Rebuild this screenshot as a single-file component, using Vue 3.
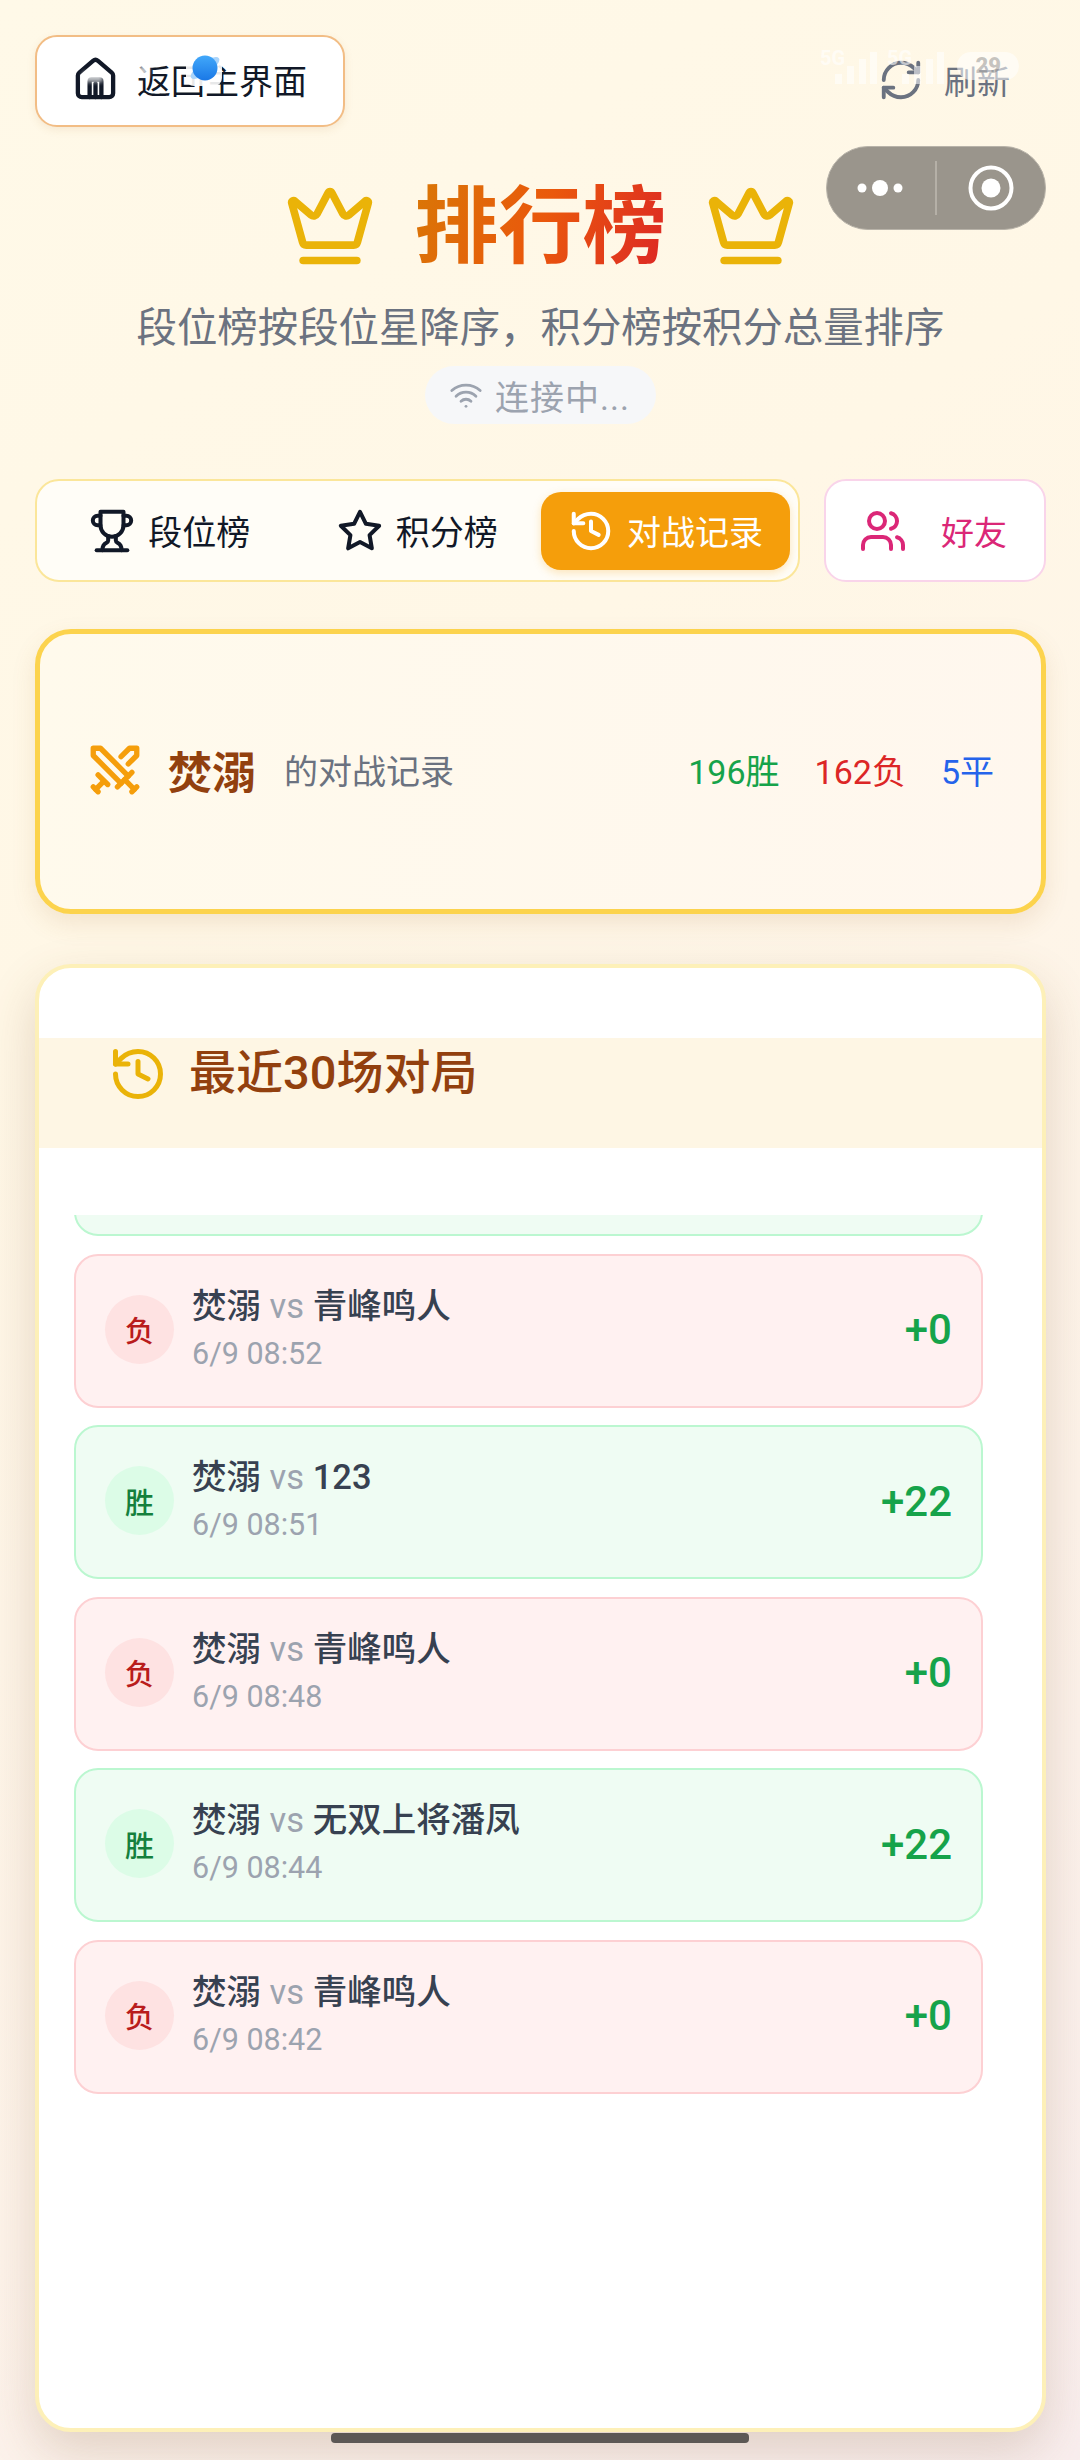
<script setup>
const rows = [
  { win: false, opp: '青峰鸣人', time: '6/9 08:52', score: '+0' },
  { win: true, opp: '123', time: '6/9 08:51', score: '+22' },
  { win: false, opp: '青峰鸣人', time: '6/9 08:48', score: '+0' },
  { win: true, opp: '无双上将潘凤', time: '6/9 08:44', score: '+22' },
  { win: false, opp: '青峰鸣人', time: '6/9 08:42', score: '+0' },
]
</script>

<template>
  <div class="page">
    <div class="topbar">
      <div class="back">
        <svg class="ic-back" viewBox="0 0 24 24"><path d="M15 21v-8a1 1 0 0 0-1-1h-4a1 1 0 0 0-1 1v8" /><path d="M12 14v7" /><path d="M3 10a2 2 0 0 1 .709-1.528l7-5.999a2 2 0 0 1 2.582 0l7 5.999A2 2 0 0 1 21 10v9a2 2 0 0 1-2 2H5a2 2 0 0 1-2-2z" /></svg>
        <span>返回主界面</span>
      </div>
      <div class="refresh">
        <svg class="ic-refresh" viewBox="0 0 24 24"><path d="M3 12a9 9 0 0 1 9-9 9.75 9.75 0 0 1 6.74 2.74L21 8" /><path d="M21 3v5h-5" /><path d="M21 12a9 9 0 0 1-9 9 9.75 9.75 0 0 1-6.74-2.74L3 16" /><path d="M8 16H3v5" /></svg>
        <span>刷新</span>
      </div>
    </div>

    <div class="title-row">
      <svg class="crown" viewBox="0 0 24 24"><path d="M11.562 3.266a.5.5 0 0 1 .876 0L15.39 8.87a1 1 0 0 0 1.516.294L21.183 5.5a.5.5 0 0 1 .798.519l-2.834 10.246a1 1 0 0 1-.956.734H5.81a1 1 0 0 1-.957-.734L2.02 6.02a.5.5 0 0 1 .798-.519l4.276 3.664a1 1 0 0 0 1.516-.294z" /><path d="M5 21h14" /></svg>
      <h1>排行榜</h1>
      <svg class="crown" viewBox="0 0 24 24"><path d="M11.562 3.266a.5.5 0 0 1 .876 0L15.39 8.87a1 1 0 0 0 1.516.294L21.183 5.5a.5.5 0 0 1 .798.519l-2.834 10.246a1 1 0 0 1-.956.734H5.81a1 1 0 0 1-.957-.734L2.02 6.02a.5.5 0 0 1 .798-.519l4.276 3.664a1 1 0 0 0 1.516-.294z" /><path d="M5 21h14" /></svg>
    </div>
    <p class="subtitle">段位榜按段位星降序，积分榜按积分总量排序</p>
    <div class="pill-wrap">
      <div class="pill">
        <svg class="ic-wifi" viewBox="0 0 24 24"><path d="M12 20h.01" /><path d="M2 8.82a15 15 0 0 1 20 0" /><path d="M5 12.859a10 10 0 0 1 14 0" /><path d="M8.5 16.429a5 5 0 0 1 7 0" /></svg>
        <span>连接中...</span>
      </div>
    </div>

    <div class="nav">
      <div class="tabs">
        <div class="tab">
          <svg class="ic-tab" viewBox="0 0 24 24"><path d="M6 9H4.5a2.5 2.5 0 0 1 0-5H6" /><path d="M18 9h1.5a2.5 2.5 0 0 0 0-5H18" /><path d="M4 22h16" /><path d="M10 14.66V17c0 .55-.47.98-.97 1.21C7.85 18.75 7 20.24 7 22" /><path d="M14 14.66V17c0 .55.47.98.97 1.21C16.15 18.75 17 20.24 17 22" /><path d="M18 2H6v7a6 6 0 0 0 12 0V2Z" /></svg>
          <span>段位榜</span>
        </div>
        <div class="tab">
          <svg class="ic-tab" viewBox="0 0 24 24"><polygon points="12 2 15.09 8.26 22 9.27 17 14.14 18.18 21.02 12 17.77 5.82 21.02 7 14.14 2 9.27 8.91 8.26 12 2" /></svg>
          <span>积分榜</span>
        </div>
        <div class="tab active">
          <svg class="ic-tab" viewBox="0 0 24 24"><path d="M3 12a9 9 0 1 0 9-9 9.75 9.75 0 0 0-6.74 2.74L3 8" /><path d="M3 3v5h5" /><path d="M12 7v5l4 2" /></svg>
          <span>对战记录</span>
        </div>
      </div>
      <div class="friends">
        <svg class="ic-friends" viewBox="0 0 24 24"><path d="M16 21v-2a4 4 0 0 0-4-4H6a4 4 0 0 0-4 4v2" /><circle cx="9" cy="7" r="4" /><path d="M22 21v-2a4 4 0 0 0-3-3.87" /><path d="M16 3.13a4 4 0 0 1 0 7.75" /></svg>
        <span>好友</span>
      </div>
    </div>

    <div class="summary">
      <svg class="ic-swords" viewBox="0 0 24 24"><polyline points="14.5 17.5 3 6 3 3 6 3 17.5 14.5" /><line x1="13" y1="19" x2="19" y2="13" /><line x1="16" y1="16" x2="20" y2="20" /><line x1="19" y1="21" x2="21" y2="19" /><polyline points="14.5 6.5 18 3 21 3 21 6 17.5 9.5" /><line x1="5" y1="14" x2="9" y2="18" /><line x1="7" y1="17" x2="4" y2="20" /><line x1="3" y1="19" x2="5" y2="21" /></svg>
      <span class="name">焚溺</span>
      <span class="of">的对战记录</span>
      <div class="stats">
        <span class="w">196胜</span>
        <span class="l">162负</span>
        <span class="d">5平</span>
      </div>
    </div>

    <div class="history">
      <div class="band">
        <svg class="ic-hist" viewBox="0 0 24 24"><path d="M3 12a9 9 0 1 0 9-9 9.75 9.75 0 0 0-6.74 2.74L3 8" /><path d="M3 3v5h5" /><path d="M12 7v5l4 2" /></svg>
        <span>最近30场对局</span>
      </div>
      <div class="list">
        <div class="row win first"></div>
        <div v-for="(r, i) in rows" :key="i" class="row" :class="r.win ? 'win' : 'lose'">
          <div class="badge">{{ r.win ? '胜' : '负' }}</div>
          <div class="info">
            <div class="match">焚溺 <i>vs</i> {{ r.opp }}</div>
            <div class="time">{{ r.time }}</div>
          </div>
          <div class="score">{{ r.score }}</div>
        </div>
      </div>
    </div>

    <div class="capsule">
      <svg class="dots" viewBox="0 0 46 16"><circle cx="5" cy="8" r="4.5" /><circle cx="23" cy="8" r="8" /><circle cx="41" cy="8" r="4.5" /></svg>
      <i class="sep"></i>
      <svg class="target" viewBox="0 0 46 46"><circle cx="23" cy="23" r="20.5" /><circle cx="23" cy="23" r="9.5" class="fill" /></svg>
    </div>

    <div class="ghost ghost-a"></div>
    <div class="ghost ghost-b"></div>

    <div class="statusbar">
      <span>5G</span>
      <svg class="bars" viewBox="0 0 42 32"><rect x="0" y="22" width="7" height="10" /><rect x="12" y="14" width="7" height="18" /><rect x="24" y="7" width="7" height="25" /><rect x="35" y="0" width="7" height="32" /></svg>
      <span class="second">5G</span>
      <svg class="bars" viewBox="0 0 42 32"><rect x="0" y="22" width="7" height="10" /><rect x="12" y="14" width="7" height="18" /><rect x="24" y="7" width="7" height="25" /><rect x="35" y="0" width="7" height="32" /></svg>
      <b class="batt">29</b>
    </div>

    <div class="planet">
      <svg viewBox="0 0 36 36">
        <defs><linearGradient id="pg" x1="0" y1="0" x2="0" y2="1"><stop offset="0" stop-color="#42a8fa" /><stop offset="1" stop-color="#1a78e6" /></linearGradient></defs>
        <ellipse cx="19" cy="18" rx="17" ry="6" transform="rotate(-35 19 18)" fill="#a9d4fb" />
        <circle cx="19" cy="18" r="12.5" fill="url(#pg)" />
      </svg>
    </div>

    <div class="home-bar"></div>
  </div>
</template>

<style>
html, body { margin: 0; padding: 0; }
</style>

<style scoped>
.page {
  position: relative;
  box-sizing: border-box;
  width: 1080px;
  height: 2460px;
  overflow: hidden;
  padding: 35px 34px 0 35px;
  background: linear-gradient(145deg, #fff9e8 0%, #fff7e6 32%, #fdf3ea 70%, #f9eeee 100%);
  font-family: Roboto, "Noto Sans CJK SC", sans-serif;
  color: #111827;
}
svg { fill: none; stroke: currentColor; stroke-linecap: round; stroke-linejoin: round; stroke-width: 2; display: block; flex: none; }

.topbar { display: flex; justify-content: space-between; align-items: center; height: 92px; }
.back {
  box-sizing: border-box;
  width: 310px;
  height: 92px;
  display: flex;
  align-items: center;
  gap: 18px;
  padding: 0 0 3px 35px;
  background: #fff;
  border: 2px solid #f2bd85;
  border-radius: 22px;
  box-shadow: 0 3px 8px rgba(180, 120, 60, .12);
  font-size: 34px;
}
.ic-back { width: 47px; height: 47px; stroke-width: 2.2; }
.refresh { display: flex; align-items: center; gap: 20px; padding: 0 36px 3px 0; color: #6b7280; font-size: 33px; }
.ic-refresh { width: 46px; height: 46px; }

.title-row { display: flex; justify-content: center; align-items: center; gap: 38px; margin-top: 55px; height: 92px; }
.crown { width: 92px; height: 92px; color: #eab308; margin-top: -4px; }
h1 {
  margin: 0;
  font-size: 84px;
  line-height: 92px;
  font-weight: 700;
  background: linear-gradient(110deg, #d97706, #ea580c 50%, #dc2626);
  -webkit-background-clip: text;
  background-clip: text;
  color: transparent;
}
.subtitle { margin: 26px 0 0; text-align: center; font-size: 40.4px; line-height: 58px; color: #6b7280; }
.pill-wrap { display: flex; justify-content: center; margin-top: 8px; }
.pill {
  display: flex;
  align-items: center;
  gap: 12px;
  height: 58px;
  padding: 0 26px 0 24px;
  border-radius: 29px;
  background: #f6f7f9;
  color: #9ca3af;
  font-size: 34px;
  letter-spacing: 1px;
}
.ic-wifi { width: 34px; height: 34px; }

.nav { display: flex; gap: 24px; margin-top: 55px; }
.tabs {
  box-sizing: border-box;
  width: 765px;
  height: 103px;
  display: flex;
  align-items: center;
  padding: 0 9px;
  background: #fffdf7;
  border: 2px solid #fbe69a;
  border-radius: 24px;
}
.tab { display: flex; align-items: center; justify-content: center; gap: 13px; height: 78px; font-size: 34px; flex: none; width: 247.5px; }
.active { width: 249px; background: #f59e0b; color: #fff; border-radius: 20px; box-shadow: 0 3px 8px rgba(245, 158, 11, .25); }
.ic-tab { width: 46px; height: 46px; stroke-width: 2.1; }
.friends {
  box-sizing: border-box;
  width: 222px;
  height: 103px;
  display: flex;
  align-items: center;
  gap: 34px;
  padding-left: 33px;
  background: #fff;
  border: 2px solid #f9d4ea;
  border-radius: 22px;
  color: #db2777;
  font-size: 33px;
}
.ic-friends { width: 48px; height: 48px; }

.summary {
  box-sizing: border-box;
  height: 285px;
  margin-top: 47px;
  display: flex;
  align-items: center;
  padding: 0 47px 4px 46px;
  background: linear-gradient(100deg, #fffaec, #fff7ee);
  border: 5px solid #fcd34d;
  border-radius: 36px;
  box-shadow: 0 10px 24px rgba(160, 110, 50, .13);
}
.ic-swords { width: 58px; height: 58px; color: #f59e0b; margin-right: 24px; stroke-width: 2.2; }
.name { font-size: 44px; font-weight: 700; color: #92400e; margin-right: 28px; }
.of { font-size: 34px; color: #6b7280; }
.stats { margin-left: auto; display: flex; gap: 35px; font-size: 34px; }
.w { color: #16a34a; }
.l { color: #dc2626; }
.d { color: #2563eb; }

.history {
  box-sizing: border-box;
  height: 1468px;
  margin-top: 50px;
  padding-top: 70px;
  background: #fff;
  border: 4px solid #fdf0b8;
  border-radius: 36px;
  box-shadow: 0 20px 50px rgba(120, 80, 40, .2);
  display: flex;
  flex-direction: column;
}
.band {
  height: 110px;
  flex: none;
  display: flex;
  align-items: flex-start;
  gap: 21px;
  box-sizing: border-box;
  padding: 6px 0 0 69px;
  background: #fef6e4;
  color: #92400e;
  font-size: 47px;
  font-weight: 500;
  line-height: 58px;
}
.ic-hist { width: 60px; height: 60px; color: #eab308; }
.list {
  margin-top: 67px;
  flex: 1;
  min-height: 0;
  overflow: hidden;
  display: flex;
  flex-direction: column;
  gap: 17.6px;
  padding: 0 59px 0 35px;
}
.row {
  box-sizing: border-box;
  height: 154px;
  flex: none;
  display: flex;
  align-items: center;
  padding: 0 29px 0 29px;
  border: 2px solid;
  border-radius: 24px;
}
.first { margin-top: -133px; }
.win { background: #effcf3; border-color: #bbf7d0; }
.lose { background: #fff1f1; border-color: #fdd0d3; }
.badge {
  width: 69px;
  height: 69px;
  border-radius: 50%;
  flex: none;
  display: flex;
  align-items: center;
  justify-content: center;
  font-size: 29px;
  font-weight: 500;
  margin: 0 18px 3px 0;
}
.win .badge { background: #dcfce7; color: #15803d; }
.lose .badge { background: #fee2e2; color: #b91c1c; }
.info { flex: 1; padding-bottom: 5px; }
.match { font-size: 34.5px; line-height: 44px; font-weight: 500; color: #374151; }
.match i { font-style: normal; font-weight: 400; color: #9ca3af; }
.time { margin-top: 7px; font-size: 30.5px; line-height: 38px; color: #9ca3af; }
.score { font-size: 42px; font-weight: 500; color: #16a34a; margin-bottom: 2px; }

.capsule {
  position: absolute;
  left: 826px;
  top: 146px;
  width: 220px;
  height: 84px;
  box-sizing: border-box;
  border-radius: 42px;
  background: #9a958c;
  border: 1px solid #b8b3a9;
  color: #fff;
  display: flex;
  align-items: center;
}
.dots { width: 46px; height: 16px; margin-left: 30px; fill: #fff; stroke: none; }
.sep { width: 2px; height: 54px; background: #b5b0a7; margin-left: 32px; }
.target { width: 46px; height: 46px; margin-left: 31px; stroke-width: 4; }
.target .fill { fill: #fff; stroke: none; }

.ghost { position: absolute; background: rgba(255, 255, 255, .75); filter: blur(2px); pointer-events: none; }
.ghost-a { left: 83px; top: 72px; width: 20px; height: 10px; }
.ghost-b { left: 137px; top: 66px; width: 12px; height: 10px; }

.statusbar {
  position: absolute;
  left: 820px;
  top: 46px;
  display: flex;
  align-items: flex-start;
  color: rgba(255, 255, 255, .6);
  font-size: 20px;
  line-height: 24px;
  font-weight: 700;
  pointer-events: none;
}
.bars { width: 42px; height: 32px; fill: rgba(255, 255, 255, .55); stroke: none; margin: 6px 0 0 -10px; }
.second { margin-left: 10px; }
.batt {
  box-sizing: border-box;
  width: 62px;
  height: 28px;
  margin: 6px 0 0 13px;
  text-align: center;
  border-radius: 14px;
  background: rgba(255, 255, 255, .55);
  color: rgba(90, 90, 90, .35);
  font-size: 22px;
  line-height: 28px;
}

.planet {
  position: absolute;
  left: 186px;
  top: 50px;
  width: 36px;
  height: 36px;
  background: rgba(255, 255, 255, .9);
  border-radius: 8px;
}
.planet svg { width: 36px; height: 36px; stroke: none; }

.home-bar {
  position: absolute;
  left: 331px;
  top: 2433px;
  width: 418px;
  height: 10px;
  border-radius: 4px;
  background: #5c5855;
}
</style>
